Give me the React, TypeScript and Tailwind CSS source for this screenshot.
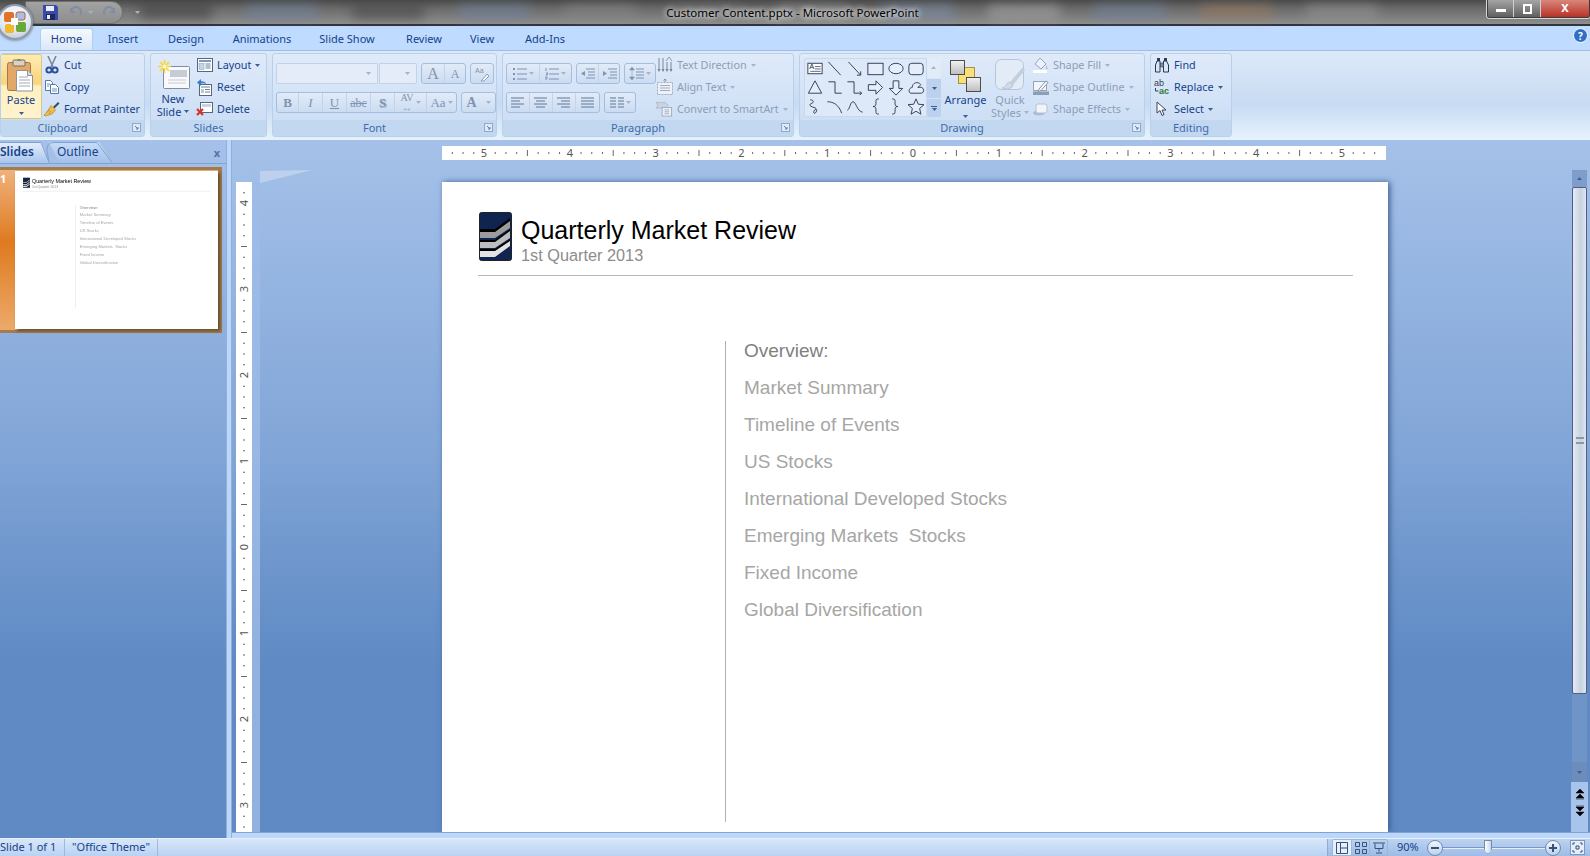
import React from 'react';

const uiFont = "[font-family:'Noto_Sans',sans-serif]";

const overviewItems = [
  'Market Summary',
  'Timeline of Events',
  'US Stocks',
  'International Developed Stocks',
  'Emerging Markets  Stocks',
  'Fixed Income',
  'Global Diversification',
];

const tabs = [
  { name: 'Insert', w: 'w-[60px]' },
  { name: 'Design', w: 'w-[66px]' },
  { name: 'Animations', w: 'w-[86px]' },
  { name: 'Slide Show', w: 'w-[84px]' },
  { name: 'Review', w: 'w-[70px]' },
  { name: 'View', w: 'w-[46px]' },
  { name: 'Add-Ins', w: 'w-[80px]' },
];

const Caret: React.FC<{ dim?: boolean }> = ({ dim }) => (
  <svg width="5" height="3" viewBox="0 0 5 3" className="shrink-0">
    <path d="M0 0h5L2.5 3z" fill={dim ? '#a3b4cc' : '#3b5f94'} />
  </svg>
);

const Launcher = () => (
  <svg width="9" height="9" viewBox="0 0 9 9" className="shrink-0">
    <rect x="0.5" y="0.5" width="8" height="8" fill="#dfe9f6" stroke="#8fa9cb" />
    <path d="M3 3l3 3M6 4v2H4" stroke="#5f7ea8" fill="none" />
  </svg>
);

const CutIcon = () => (
  <svg width="16" height="18" viewBox="0 0 16 18">
    <path d="M4 0l5 11M12 0L7 11" stroke="#7b8797" strokeWidth="1.6" />
    <circle cx="5" cy="14" r="2.6" fill="none" stroke="#2f4f9c" strokeWidth="2" />
    <circle cx="11" cy="14" r="2.6" fill="none" stroke="#2f4f9c" strokeWidth="2" />
  </svg>
);
const CopyIcon = () => (
  <svg width="16" height="16" viewBox="0 0 16 16">
    <path d="M1.5 1.5h5l2 2v8h-7z" fill="#fff" stroke="#5578a8" />
    <path d="M6.5 5.5h5l3 3v6h-8z" fill="#fff" stroke="#5578a8" />
    <path d="M3 5h3M3 7h2M8 10h5M8 12h5" stroke="#6f8fc0" />
  </svg>
);
const PainterIcon = () => (
  <svg width="16" height="16" viewBox="0 0 16 16">
    <path d="M9 6l5-5 1.5 1.5-5 5z" fill="#3e4a5e" />
    <path d="M7 4.5l4.5 4.5L8 13 1 15l-1-1 3-3z" fill="#efc04e" stroke="#b58722" strokeWidth="0.7" />
    <path d="M3 11l3-2M5 13l2-3" stroke="#b58722" strokeWidth="0.7" />
  </svg>
);
const LayoutIcon = () => (
  <svg width="16" height="14" viewBox="0 0 16 14">
    <rect x="0.5" y="0.5" width="15" height="13" fill="#fff" stroke="#56667c" />
    <rect x="2" y="2" width="12" height="2" fill="#7d98c0" />
    <rect x="2" y="5.5" width="5" height="6" fill="#c6d4e8" stroke="#7d98c0" strokeWidth="0.5" />
    <path d="M8.5 6h5M8.5 8h5M8.5 10h5" stroke="#6c7f99" />
  </svg>
);
const ResetIcon = () => (
  <svg width="17" height="17" viewBox="0 0 17 17">
    <rect x="3.5" y="5.5" width="12" height="11" fill="#fff" stroke="#56667c" />
    <path d="M5 8h9M9 10.5h5M9 13h5" stroke="#6c7f99" />
    <rect x="5" y="10" width="3" height="4" fill="#b9c9e0" />
    <path d="M1 3.5L5 0v2.2c3 0 4.5 1 5.5 3C9 4.2 7 4.2 5 4.5V7z" fill="#3a78c8" />
  </svg>
);
const DeleteIcon = () => (
  <svg width="17" height="15" viewBox="0 0 17 15">
    <rect x="4.5" y="0.5" width="12" height="10" fill="#fff" stroke="#56667c" />
    <rect x="6" y="2" width="9" height="3" fill="#c6d4e8" />
    <path d="M1 7l6 6M7 7l-6 6" stroke="#d8322a" strokeWidth="2.2" />
  </svg>
);
const ClipboardIcon = () => (
  <svg width="28" height="33" viewBox="0 0 28 33">
    <rect x="0.5" y="3.5" width="23" height="28" rx="2" fill="#e2a869" stroke="#9d7a52" />
    <rect x="6" y="1" width="12" height="6" rx="1" fill="#d9d3c4" stroke="#7c6f5d" />
    <path d="M10.5 2a1.5 1.5 0 013 0" fill="none" stroke="#7c6f5d" />
    <path d="M9.5 11.5h11l5 5v15.5h-16z" fill="#fff" stroke="#8e9299" />
    <path d="M20.5 11.5v5h5" fill="#d8dde4" stroke="#8e9299" />
    <path d="M12 18h9M12 21h11M12 24h11M12 27h11" stroke="#a3a8b2" />
  </svg>
);
const NewSlideIcon = () => (
  <svg width="32" height="32" viewBox="0 0 32 32">
    <rect x="5.5" y="6.5" width="26" height="22" rx="1" fill="#f7f9fc" stroke="#7f8ea3" />
    <rect x="12" y="10" width="17" height="7" fill="#c7ccd4" />
    <path d="M10 20h18M10 23h18" stroke="#c6ccd5" />
    <path d="M6.5 0v13M0 6.5h13M2 2l9 9M11 2l-9 9" stroke="#f6d63b" strokeWidth="1.7" />
    <circle cx="6.5" cy="6.5" r="2" fill="#fff8c4" />
  </svg>
);
const BinocularsIcon = () => (
  <svg width="16" height="16" viewBox="0 0 16 16">
    <path d="M3 1h3v3H3zM10 1h3v3h-3z" fill="#2b3d5c" />
    <path d="M1.5 15V8l1.5-4h3v11zM9.5 15V4h3l2 4v7z" fill="#dbe6f5" stroke="#233857" />
    <path d="M6.5 6h3v4h-3z" fill="#7d8ea8" stroke="#233857" strokeWidth="0.6" />
  </svg>
);
const ReplaceIcon = () => (
  <svg width="16" height="18" viewBox="0 0 16 18">
    <text x="0" y="8" fontSize="9" fontFamily="Liberation Sans" fill="#333f55">ab</text>
    <text x="5" y="16" fontSize="9" fontWeight="bold" fontFamily="Liberation Sans" fill="#2d7a35">ac</text>
    <path d="M1.5 10v3h3" stroke="#23406f" fill="none" />
  </svg>
);
const CursorIcon = () => (
  <svg width="12" height="16" viewBox="0 0 12 16">
    <path d="M1 1v11l3-2.500 2 5 2-1-2-4.500h4z" fill="#fff" stroke="#39465a" />
  </svg>
);
const FillIcon = () => (
  <svg width="16" height="16" viewBox="0 0 16 16">
    <path d="M7 1l6 6-5 5-6-5z" fill="#eef2f8" stroke="#97a5b9" />
    <path d="M13 8c1 2 2 3 1.500 4s-2 0-1.500-4z" fill="#a9b6c8" />
    <rect x="0" y="13" width="14" height="3" fill="#fff" />
  </svg>
);
const OutlineIcon = () => (
  <svg width="16" height="16" viewBox="0 0 16 16">
    <rect x="0.5" y="2.500" width="13" height="9" fill="#f3f6fa" stroke="#97a5b9" />
    <path d="M6 10l7-8 2 1.500-7 8-3 1z" fill="#fff" stroke="#8494aa" />
    <rect x="0" y="12.500" width="16" height="3.500" fill="#8c9db5" />
  </svg>
);
const EffectsIcon = () => (
  <svg width="16" height="14" viewBox="0 0 16 14">
    <ellipse cx="6" cy="11" rx="6" ry="2.500" fill="#aebccf" />
    <rect x="3" y="2" width="11" height="9" rx="2" fill="#f1f4f8" stroke="#b5c1d1" />
  </svg>
);
const TextDirIcon = () => (
  <svg width="16" height="18" viewBox="0 0 16 18">
    <path d="M2 2v13M6 2v13M10 6v9M14 6v9" stroke="#77879d" />
    <path d="M9 5l3-4 3 4" fill="none" stroke="#8d9cb1" />
    <path d="M0.500 13l1.500 3 1.500-3M4.500 13L6 16l1.500-3M8.500 13l1.500 3 1.500-3M12.500 13l1.500 3 1.500-3" fill="#77879d" />
  </svg>
);
const AlignTextIcon = () => (
  <svg width="16" height="16" viewBox="0 0 16 16">
    <rect x="0.500" y="3.500" width="15" height="12" fill="#eef2f8" stroke="#9eacc0" strokeDasharray="2 1" />
    <path d="M3 6.500h10M3 9h10M3 11.500h10" stroke="#9eacc0" />
    <path d="M8 0v3M6.500 1.500L8 0l1.500 1.500" stroke="#8092ab" fill="none" />
  </svg>
);
const SmartArtIcon = () => (
  <svg width="18" height="16" viewBox="0 0 18 16">
    <path d="M0 1h10l3 3-3 3H0l2-3z" fill="#c9d3e1" stroke="#9eacc0" strokeWidth="0.6" />
    <rect x="6.500" y="6.500" width="10" height="9" fill="#eef2f8" stroke="#9eacc0" />
    <path d="M9 9h5M9 11h5M9 13h5" stroke="#9eacc0" />
  </svg>
);
const ArrangeIcon = () => (
  <svg width="32" height="32" viewBox="0 0 32 32">
    <rect x="8.500" y="7.500" width="16" height="16" fill="#f8df7a" stroke="#a8924a" />
    <rect x="0.500" y="0.500" width="14" height="14" fill="url(#arr1)" stroke="#4c4c4c" />
    <rect x="16.500" y="17.500" width="14" height="14" fill="url(#arr1)" stroke="#4c4c4c" />
    <defs>
      <linearGradient id="arr1" x1="0" y1="0" x2="0" y2="1">
        <stop offset="0" stopColor="#f2f2f2" />
        <stop offset="1" stopColor="#bdbdbd" />
      </linearGradient>
    </defs>
  </svg>
);
const QuickStylesIcon = () => (
  <svg width="32" height="34" viewBox="0 0 32 34">
    <rect x="1.500" y="1.500" width="28" height="30" rx="6" fill="#e3ebf6" stroke="#b7c5d8" />
    <path d="M29 9L16 24l3 3L31 12z" fill="#c3cfdf" />
    <path d="M15 24c-3 1-2 5-7 6 5 2 11 0 11-3z" fill="#d2dbe8" stroke="#b7c5d8" />
  </svg>
);

const shapeCells: React.ReactNode[] = [
  <g key="0"><rect x="2.500" y="4.500" width="15" height="11" fill="#fff" stroke="#2e3d55" /><text x="4" y="11" fontSize="8" fontFamily="Liberation Sans" fill="#1b2b4b">A</text><path d="M10 8h6M5 13h11M10 10.500h6" stroke="#56677f" /></g>,
  <path key="1" d="M3 3l13 14" stroke="#2e3d55" fill="none" />,
  <path key="2" d="M3 3l13 14M16 17v-4M16 17h-4" stroke="#2e3d55" fill="none" />,
  <rect key="3" x="2.500" y="4.500" width="16" height="12" fill="#e4edf9" stroke="#2e3d55" />,
  <ellipse key="4" cx="10" cy="10" rx="7.500" ry="5.500" fill="#e4edf9" stroke="#2e3d55" />,
  <rect key="5" x="2.500" y="4.500" width="15" height="12" rx="3" fill="#e4edf9" stroke="#2e3d55" />,
  <path key="6" d="M10 3l7 13H3z" fill="#e4edf9" stroke="#2e3d55" />,
  <path key="7" d="M3 4h7v12h7" stroke="#2e3d55" fill="none" />,
  <path key="8" d="M2 4h7v12h8M15 14l2 2-2 2" stroke="#2e3d55" fill="none" />,
  <path key="9" d="M3 7h8V3l7 7-7 7v-4H3z" fill="#e4edf9" stroke="#2e3d55" />,
  <path key="10" d="M7 3h6v8h4l-7 7-7-7h4z" fill="#e4edf9" stroke="#2e3d55" />,
  <path key="11" d="M4 16c-3-3 0-6 2-6 0-5 6-7 9-3l-3 3c3-1 6 0 6 3s-2 3-4 3z" fill="#e4edf9" stroke="#2e3d55" />,
  <path key="12" d="M5 3c4 0 4 3 1 4s-1 3 3 4 3 5 1 6-2-3 1-4" stroke="#2e3d55" fill="none" />,
  <path key="13" d="M2 5c6 0 12 3 15 12" stroke="#2e3d55" fill="none" />,
  <path key="14" d="M2 14c3-2 3-9 6-9s4 10 10 11" stroke="#2e3d55" fill="none" />,
  <path key="15" d="M14 2c-3 0-3 1-3 3v2c0 2-1 3-3 3 2 0 3 1 3 3v2c0 2 0 3 3 3" stroke="#2e3d55" fill="none" />,
  <path key="16" d="M6 2c3 0 3 1 3 3v2c0 2 1 3 3 3-2 0-3 1-3 3v2c0 2 0 3-3 3" stroke="#2e3d55" fill="none" />,
  <path key="17" d="M10 2l2.400 5.600 6 .5-4.600 4 1.400 6L10 15l-5.200 3.100 1.400-6-4.600-4 6-.5z" fill="#e4edf9" stroke="#2e3d55" />,
];

// small format buttons in the Font and Paragraph groups
const Seg: React.FC<{ w: string; children?: React.ReactNode; last?: boolean }> = ({ w, children, last }) => (
  <div className={`${w} h-full flex items-center justify-center gap-[2px] ${last ? '' : 'border-r border-[#c3d4ea]'}`}>{children}</div>
);
const SegGroup: React.FC<{ children: React.ReactNode }> = ({ children }) => (
  <div className="flex h-[21px] rounded-[3px] border border-[#a6bedd] bg-[linear-gradient(180deg,#e2ebf8,#cbdcf2)]">{children}</div>
);

const RowBtn: React.FC<{ icon: React.ReactNode; label: string; caret?: boolean; dim?: boolean }> = ({ icon, label, caret, dim }) => (
  <div className={`flex items-center h-[22px] gap-[4px] text-[10.8px] whitespace-nowrap ${dim ? 'text-[#8c9db6]' : 'text-[#15428b]'}`}>
    <span className="w-[17px] flex justify-center shrink-0">{icon}</span>
    <span>{label}</span>
    {caret && <Caret dim={dim} />}
  </div>
);

const BigLabel: React.FC<{ lines: string[]; caret?: boolean; dim?: boolean }> = ({ lines, caret, dim }) => (
  <div className={`flex flex-col items-center text-[11px] leading-[13px] whitespace-nowrap ${dim ? 'text-[#8c9db6]' : 'text-[#15428b]'}`}>
    {lines.map((l, i) => (
      <div key={l} className="flex items-center gap-[3px] h-[13px]">
        {l}
        {caret && i === lines.length - 1 && <Caret dim={dim} />}
      </div>
    ))}
  </div>
);

const Group: React.FC<{ label: string; w: string; launcher?: boolean; children: React.ReactNode }> = ({ label, w, launcher, children }) => (
  <div className={`${w} h-[84px] flex flex-col shrink-0 rounded-[3px] border border-[#b9d0ec] bg-[linear-gradient(180deg,#dfeafa,#c9dcf4)] overflow-hidden`}>
    <div className="h-[67px] flex">{children}</div>
    <div className={`h-[16px] flex items-center justify-center relative bg-[#c2d8f1] text-[11px] text-[#3e6aaa] ${launcher ? 'pr-[20px]' : ''}`}>
      {label}
      {launcher && (
        <span className="absolute right-[3px] top-[3px]">
          <Launcher />
        </span>
      )}
    </div>
  </div>
);

const Logo = () => (
  <svg width="33" height="49" viewBox="0 0 33 49" className="shrink-0 ml-[1px]">
    <rect x="0.500" y="0.500" width="32" height="48" rx="2" fill="#0f2550" stroke="#222" />
    <path d="M1 17h15L31 6v6L16 23H1z" fill="#000" />
    <path d="M1 20h15L31 9v7L16 26H1z" fill="#9c9c9c" />
    <path d="M1 28h15L31 17v6L16 33H1z" fill="#000" />
    <path d="M1 30h15L31 19v7L16 36H1z" fill="#bdbdbd" />
    <path d="M1 37h15L31 27v5L16 41H1z" fill="#000" />
    <path d="M1 39h15L31 29v5L16 45H1z" fill="#e3e3e3" />
  </svg>
);

const SlideContent = () => (
  <div className="w-[946px] h-[736px] bg-white relative [font-family:'Liberation_Sans',sans-serif] pt-[30px] px-[36px]">
    <div className="flex items-start gap-[9px] h-[63px]">
      <Logo />
      <div className="pt-[1px]">
        <div className="text-[25px] leading-[34px] text-black whitespace-nowrap">Quarterly Market Review</div>
        <div className="text-[16.3px] leading-[20px] mt-[-2px] text-[#8c8c8c] whitespace-nowrap">1st Quarter 2013</div>
      </div>
    </div>
    <div className="h-px bg-[#b8b8b8] w-[875px]" />
    <div className="ml-[247px] mt-[65px] h-[481px] flex flex-col border-l border-[#b0b0b0] pl-[18px] text-[19px] leading-[37px] whitespace-pre text-[#a6a6a6]">
      <div className="text-[#7f7f7f] h-[37px] mt-[-9px]">Overview:</div>
      {overviewItems.map((t) => (
        <div key={t} className="h-[37px]">
          {t}
        </div>
      ))}
    </div>
  </div>
);

const HorizontalRuler = () => {
  const marks: React.ReactNode[] = [];
  const inch = 85.8;
  for (let i = -44; i <= 44; i++) {
    const x = 471 + (i * inch) / 8;
    if (x < 2 || x > 942) continue;
    if (i % 8 === 0) {
      marks.push(
        <text key={i} x={x} y="11" fontSize="11" textAnchor="middle" fill="#555" fontFamily="Noto Sans">
          {Math.abs(i / 8)}
        </text>,
      );
    } else if (i % 4 === 0) {
      marks.push(<rect key={i} x={x} y="4" width="1" height="6" fill="#666" />);
    } else {
      marks.push(<rect key={i} x={x} y="6" width="1" height="2" fill="#666" />);
    }
  }
  return (
    <svg width="944" height="14" viewBox="0 0 944 14" className="bg-white block">
      {marks}
    </svg>
  );
};

const VerticalRuler = () => {
  const marks: React.ReactNode[] = [];
  const inch = 86;
  for (let i = -34; i <= 30; i++) {
    const y = 365 + (i * inch) / 8;
    if (y < 1 || y > 648) continue;
    if (i % 8 === 0) {
      marks.push(
        <text key={i} x="8" y={y + 4} fontSize="11" textAnchor="middle" fill="#555" fontFamily="Noto Sans" transform={`rotate(-90 8 ${y})`}>
          {Math.abs(i / 8)}
        </text>,
      );
    } else if (i % 4 === 0) {
      marks.push(<rect key={i} x="5" y={y} width="6" height="1" fill="#666" />);
    } else {
      marks.push(<rect key={i} x="7" y={y} width="2" height="1" fill="#666" />);
    }
  }
  return (
    <svg width="16" height="650" viewBox="0 0 16 650" className="bg-white block">
      {marks}
    </svg>
  );
};

const OfficeButton = () => (
  <div className="absolute left-[-3px] top-[4px] w-[36px] h-[36px] rounded-full border-2 border-[#8f9aa6] bg-[radial-gradient(circle_at_50%_30%,#ffffff,#dce6f2_60%,#aeb9c6)] flex items-center justify-center shadow-[0_0_3px_#555] z-10">
    <svg width="26" height="26" viewBox="0 0 26 26">
      <rect x="2" y="3" width="10" height="10" rx="2" fill="#e2722a" />
      <rect x="14" y="3" width="9" height="8" rx="2" fill="#9fc3e8" stroke="#d2542a" />
      <rect x="3" y="15" width="9" height="9" rx="2" fill="#f2b82c" />
      <rect x="14" y="13" width="10" height="10" rx="2" fill="#6aa83c" />
      <rect x="9" y="9" width="7" height="7" fill="#fff" />
    </svg>
  </div>
);

const QuickAccess = () => (
  <div className="ml-[25px] w-[98px] h-[23px] mt-[1px] rounded-r-full bg-[linear-gradient(180deg,#a2a2a2,#8e8e8e)] border border-[#6f6f6f] flex items-center pl-[17px] gap-[6px]">
    <svg width="15" height="15" viewBox="0 0 15 15">
      <path d="M0 0h13l2 2v13H0z" fill="#3a4aa8" />
      <rect x="3" y="1" width="8" height="5" fill="#e8edf6" />
      <rect x="3" y="9" width="9" height="6" fill="#20295e" />
      <rect x="4" y="10" width="3" height="4" fill="#e8edf6" />
    </svg>
    <svg width="13" height="13" viewBox="0 0 13 13" className="ml-[5px]">
      <path d="M2 6a5 5 0 119 3M2 2v4h4" fill="none" stroke="#7f8ea5" strokeWidth="2" />
    </svg>
    <Caret dim />
    <svg width="13" height="13" viewBox="0 0 13 13" className="ml-[4px]">
      <path d="M11 6a5 5 0 10-9 3M11 2v4H7" fill="none" stroke="#7f8ea5" strokeWidth="2" />
    </svg>
  </div>
);

const WindowButtons = () => (
  <div className="flex h-[18px] border border-t-0 border-[#3c3c3c] rounded-b-[3px] overflow-hidden shrink-0 shadow-[0_0_0_1px_#d8d8d8]">
    <div className="w-[26px] bg-[linear-gradient(180deg,#a5a5a5,#5f5f5f)] flex items-center justify-center border-r border-[#d0d0d0]">
      <div className="w-[10px] h-[3px] bg-white mt-[4px]" />
    </div>
    <div className="w-[27px] bg-[linear-gradient(180deg,#a5a5a5,#5f5f5f)] flex items-center justify-center border-r border-[#d0d0d0]">
      <div className="w-[9px] h-[10px] border-2 border-white" />
    </div>
    <div className="w-[48px] bg-[linear-gradient(180deg,#d9867a,#b83226)] flex items-center justify-center text-white font-bold text-[11px]">X</div>
  </div>
);

export default function App() {
  return (
    <div className={`w-[1590px] h-[856px] flex flex-col overflow-hidden ${uiFont} bg-[#bfdbff]`}>
      {/* Title bar */}
      <div className="h-[26px] shrink-0 relative flex border-b-2 border-b-[#30353b] bg-[linear-gradient(180deg,#4a4a4a,#6a6a6a_35%,#8e8e8e)]">
        <div className="absolute inset-0 flex items-center gap-[34px] pl-[140px] blur-[6px] opacity-50 overflow-hidden">
          {['bg-[#2f2f2f]', 'bg-[#6e87a8]', 'bg-[#3a3a3a]', 'bg-[#6e87a8]', 'bg-[#8a8a8a]', 'bg-[#7a7a7a]', 'bg-[#9a9a9a]', 'bg-[#7b93b4]', 'bg-[#b1b1b1]', 'bg-[#6e87a8]', 'bg-[#a07a55]', 'bg-[#9a9a9a]'].map((c, i) => (
            <div key={i} className={`${c} w-[72px] h-[14px] rounded-sm shrink-0`} />
          ))}
        </div>
        <OfficeButton />
        <div className="relative z-[1]">
          <QuickAccess />
        </div>
        <div className="relative ml-[12px] self-center z-[1]">
          <Caret dim />
        </div>
        <div className="relative z-[1] flex-1 flex justify-center pr-[42px] pt-[5px] text-[11.5px] leading-[16px] text-black [text-shadow:0_0_6px_#fff,0_0_6px_#fff]">
          Customer Content.pptx - Microsoft PowerPoint
        </div>
        <div className="relative z-[1]">
          <WindowButtons />
        </div>
      </div>

      {/* Tabs */}
      <div className="h-[24px] shrink-0 flex items-end pl-[40px] bg-[#bfdbff] text-[11px] text-[#15428b]">
        <div className="w-[53px] h-[22px] flex items-center justify-center rounded-t-[3px] border border-b-0 border-[#b3cdea] bg-[linear-gradient(180deg,#f5f9fe,#dbe8f8)]">Home</div>
        {tabs.map((t) => (
          <div key={t.name} className={`${t.w} h-[22px] flex items-center justify-center`}>
            {t.name}
          </div>
        ))}
        <div className="flex-1 flex justify-end pr-[2px] self-start pt-[2px]">
          <div className="w-[15px] h-[15px] rounded-full bg-[#2f6fc4] border border-white text-white text-[10px] font-bold flex items-center justify-center leading-none">?</div>
        </div>
      </div>

      {/* Ribbon */}
      <div className="h-[90px] shrink-0 flex gap-[5px] pt-[2px] border-t border-[#9dbde2] bg-[linear-gradient(180deg,#dde9f8,#c8dbf3_60%,#e6f3fd)]">
        <Group label="Clipboard" w="w-[145px]" launcher>
          <div className="w-[41px] h-[65px] shrink-0 flex flex-col items-center rounded-r-[2px] border border-l-0 border-[#d8c68c] bg-[linear-gradient(180deg,#fdecb4,#fbd476_45%,#fff0c0_50%,#fef3cf)]">
            <div className="h-[36px] pt-[4px]">
              <ClipboardIcon />
            </div>
            <div className="text-[11px] text-[#15428b] leading-[13px] mt-[2px]">Paste</div>
            <div className="mt-[6px]">
              <Caret />
            </div>
          </div>
          <div className="pl-[1px]">
            <RowBtn icon={<CutIcon />} label="Cut" />
            <RowBtn icon={<CopyIcon />} label="Copy" />
            <RowBtn icon={<PainterIcon />} label="Format Painter" />
          </div>
        </Group>
        <Group label="Slides" w="w-[117px]">
          <div className="w-[44px] flex flex-col items-center">
            <div className="h-[38px] pt-[6px] pl-[2px]">
              <NewSlideIcon />
            </div>
            <BigLabel lines={['New', 'Slide']} caret />
          </div>
          <div className="pl-[1px]">
            <RowBtn icon={<LayoutIcon />} label="Layout" caret />
            <RowBtn icon={<ResetIcon />} label="Reset" />
            <RowBtn icon={<DeleteIcon />} label="Delete" />
          </div>
        </Group>
        <Group label="Font" w="w-[225px]" launcher>
          <div className="pl-[3px] pt-[9px] flex flex-col gap-[8px]">
            <div className="flex gap-[4px]">
              <div className="flex h-[21px] gap-px">
                <div className="w-[102px] border border-[#c2d3e8] bg-[#e3ecf8] rounded-l-[2px] flex items-center justify-end pr-[6px]">
                  <Caret dim />
                </div>
                <div className="w-[38px] border border-[#c2d3e8] bg-[#e3ecf8] rounded-r-[2px] flex items-center justify-end pr-[6px]">
                  <Caret dim />
                </div>
              </div>
              <SegGroup>
                <Seg w="w-[23px]">
                  <span className="[font-family:'Liberation_Serif',serif] text-[16px] text-[#7f93b1]">A</span>
                </Seg>
                <Seg w="w-[20px]" last>
                  <span className="[font-family:'Liberation_Serif',serif] text-[12px] text-[#7f93b1]">A</span>
                </Seg>
              </SegGroup>
              <SegGroup>
                <Seg w="w-[22px]" last>
                  <svg width="16" height="16" viewBox="0 0 16 16">
                    <text x="1" y="7" fontSize="7" fill="#7f93b1" fontFamily="Liberation Sans">Aa</text>
                    <path d="M8 14l5-6 2 2-5 5H7z" fill="#f4f6fa" stroke="#8ca0bc" />
                  </svg>
                </Seg>
              </SegGroup>
            </div>
            <div className="flex gap-[4px] [font-family:'Liberation_Serif',serif] text-[#7f93b1]">
              <SegGroup>
                <Seg w="w-[22px]"><span className="font-bold text-[13px]">B</span></Seg>
                <Seg w="w-[24px]"><span className="italic text-[13px]">I</span></Seg>
                <Seg w="w-[24px]"><span className="underline text-[13px]">U</span></Seg>
                <Seg w="w-[24px]"><span className="line-through text-[12px]">abc</span></Seg>
                <Seg w="w-[24px]"><span className="font-bold text-[13px] [text-shadow:1px_1px_1px_#8ea2bd]">S</span></Seg>
                <Seg w="w-[32px]">
                  <span className="text-[10px] leading-[10px] text-center">AV<br />↔</span>
                  <Caret dim />
                </Seg>
                <Seg w="w-[29px]" last>
                  <span className="text-[13px]">Aa</span>
                  <Caret dim />
                </Seg>
              </SegGroup>
              <SegGroup>
                <Seg w="w-[33px]" last>
                  <span className="text-[14px] font-bold mr-[7px]">A</span>
                  <Caret dim />
                </Seg>
              </SegGroup>
            </div>
          </div>
        </Group>
        <Group label="Paragraph" w="w-[292px]" launcher>
          <div className="pl-[3px] pt-[9px] flex flex-col gap-[8px] shrink-0">
            <div className="flex gap-[4px]">
              <SegGroup>
                <Seg w="w-[33px]">
                  <svg width="14" height="12" viewBox="0 0 14 12">
                    <path d="M0 1h2M0 6h2M0 11h2" stroke="#7f93b1" strokeWidth="2" />
                    <path d="M4 1h10M4 6h10M4 11h10" stroke="#7f93b1" />
                  </svg>
                  <Caret dim />
                </Seg>
                <Seg w="w-[31px]" last>
                  <svg width="14" height="12" viewBox="0 0 14 12">
                    <path d="M1 0v3M1 5h2L1 7h2M0 9h2v2H0" stroke="#7f93b1" fill="none" />
                    <path d="M4 1h10M4 6h10M4 11h10" stroke="#7f93b1" />
                  </svg>
                  <Caret dim />
                </Seg>
              </SegGroup>
              <SegGroup>
                <Seg w="w-[22px]">
                  <svg width="15" height="12" viewBox="0 0 15 12">
                    <path d="M6 1h9M8 4h7M8 7h7M6 10h9" stroke="#7f93b1" />
                    <path d="M5 3v5L1 5.500z" fill="#7f93b1" />
                  </svg>
                </Seg>
                <Seg w="w-[20px]" last>
                  <svg width="15" height="12" viewBox="0 0 15 12">
                    <path d="M6 1h9M8 4h7M8 7h7M6 10h9" stroke="#7f93b1" />
                    <path d="M1 3v5l4-2.500z" fill="#7f93b1" />
                  </svg>
                </Seg>
              </SegGroup>
              <SegGroup>
                <Seg w="w-[30px]" last>
                  <svg width="15" height="15" viewBox="0 0 15 15">
                    <path d="M3 1l2.500 3h-5zM3 14l2.500-3h-5zM3 4v7" fill="#7f93b1" stroke="#7f93b1" strokeWidth="0.5" />
                    <path d="M7 3h8M7 6h8M7 9h8M7 12h8" stroke="#7f93b1" />
                  </svg>
                  <Caret dim />
                </Seg>
              </SegGroup>
            </div>
            <div className="flex gap-[4px]">
              <SegGroup>
                {[
                  'M0 1h13M0 4h9M0 7h13M0 10h9',
                  'M0 1h13M2 4h9M0 7h13M2 10h9',
                  'M0 1h13M4 4h9M0 7h13M4 10h9',
                  'M0 1h13M0 4h13M0 7h13M0 10h13',
                ].map((d, i) => (
                  <Seg key={d} w="w-[23px]" last={i === 3}>
                    <svg width="14" height="11" viewBox="0 0 14 11">
                      <path d={d} stroke="#61789a" />
                    </svg>
                  </Seg>
                ))}
              </SegGroup>
              <SegGroup>
                <Seg w="w-[30px]" last>
                  <svg width="14" height="12" viewBox="0 0 14 12">
                    <path d="M0 1h6M0 4h6M0 7h6M0 10h6M8 1h6M8 4h6M8 7h6M8 10h6" stroke="#61789a" />
                  </svg>
                  <Caret dim />
                </Seg>
              </SegGroup>
            </div>
          </div>
          <div className="pt-0">
            <RowBtn icon={<TextDirIcon />} label="Text Direction" caret dim />
            <RowBtn icon={<AlignTextIcon />} label="Align Text" caret dim />
            <RowBtn icon={<SmartArtIcon />} label="Convert to SmartArt" caret dim />
          </div>
        </Group>
        <Group label="Drawing" w="w-[346px]" launcher>
          <div className="pl-[4px] pt-[4px] flex shrink-0">
            <div className="w-[123px] h-[59px] grid grid-cols-6 content-start border border-[#c8d9ee] bg-[#dde9f8] rounded-l-[2px]">
              {shapeCells.map((c, i) => (
                <svg key={i} width="20" height="19" viewBox="0 0 20 20">
                  {c}
                </svg>
              ))}
            </div>
            <div className="w-[14px] h-[59px] flex flex-col gap-px">
              <div className="h-[20px] flex items-center justify-center rounded-t-[2px] bg-[#e2ebf8] rotate-180"><Caret dim /></div>
              <div className="h-[19px] flex items-center justify-center bg-[#bcd1ee]"><Caret /></div>
              <div className="h-[18px] flex flex-col items-center justify-center gap-px rounded-b-[2px] bg-[#bcd1ee]">
                <div className="w-[6px] h-px bg-[#3b5f94]" />
                <Caret />
              </div>
            </div>
          </div>
          <div className="w-[53px] ml-[-2px] flex flex-col items-center shrink-0">
            <div className="h-[39px] pt-[6px]">
              <ArrangeIcon />
            </div>
            <BigLabel lines={['Arrange']} />
            <div className="mt-[9px]">
              <Caret />
            </div>
          </div>
          <div className="w-[40px] ml-[-2px] flex flex-col items-center shrink-0">
            <div className="h-[39px] pt-[4px]">
              <QuickStylesIcon />
            </div>
            <BigLabel lines={['Quick', 'Styles']} caret dim />
          </div>
          <div className="pl-[2px]">
            <RowBtn icon={<FillIcon />} label="Shape Fill" caret dim />
            <RowBtn icon={<OutlineIcon />} label="Shape Outline" caret dim />
            <RowBtn icon={<EffectsIcon />} label="Shape Effects" caret dim />
          </div>
        </Group>
        <Group label="Editing" w="w-[82px]">
          <div className="pl-[2px]">
            <RowBtn icon={<BinocularsIcon />} label="Find" />
            <RowBtn icon={<ReplaceIcon />} label="Replace" caret />
            <RowBtn icon={<CursorIcon />} label="Select" caret />
          </div>
        </Group>
      </div>

      {/* Work area */}
      <div className="h-[698px] shrink-0 flex bg-[linear-gradient(180deg,#a5c1e9,#81a5d7_45%,#6f97cd_60%,#5f8ac4_75%,#5f8ac4)]">
        {/* Slides pane */}
        <div className="w-[226px] shrink-0 flex flex-col">
          <div className="h-[22px] mt-[2px] flex border-b border-[#7fa3d2] relative text-[12px] text-[#15428b]">
            <div className="w-[50px] h-[21px] font-semibold leading-[20px] bg-[linear-gradient(180deg,#e6effb,#a9c6ec)] [clip-path:polygon(0_0,82%_0,100%_100%,0_100%)] whitespace-nowrap">Slides</div>
            <div className="w-[64px] h-[21px] ml-[-1px] pl-[8px] leading-[20px] bg-[linear-gradient(180deg,#c9ddf6,#a2c0ea)] [clip-path:polygon(0_0,78%_0,100%_100%,16%_100%)] whitespace-nowrap">Outline</div>
            <svg width="116" height="21" viewBox="0 0 116 21" className="absolute left-0 top-0">
              <path d="M0 .5h41l8 20M49 20.500l-2-12q-1-8 7-8h43l15 20" fill="none" stroke="#7fa3d2" />
            </svg>
            <div className="flex-1 flex justify-end items-center pr-[6px] pb-[1px] text-[11px] font-bold text-[#4f72a8] leading-none">x</div>
          </div>
          <div className="mt-[3px] w-[222px] h-[166px] flex items-center pl-[15px] relative border-y-[3px] border-r-[4px] border-[#a47c4e] bg-[linear-gradient(180deg,#efb27c,#df7a20_45%,#ecaa69)]">
            <span className="absolute left-0 top-[3px] text-[11px] leading-none font-bold text-white">1</span>
            <div className="w-[203px] h-[158px] overflow-hidden shadow-[2px_2px_3px_#5f4a2e] bg-white">
              <div className="w-[946px] h-[736px] origin-top-left scale-[0.2146]">
                <SlideContent />
              </div>
            </div>
          </div>
        </div>

        {/* Splitter */}
        <div className="w-[6px] shrink-0 bg-[#bdd7f8] border-x border-[#8fb0dc]" />

        <div className="flex-1 flex flex-col">
          <div className="h-[692px] flex overflow-hidden relative">
            <svg width="52" height="14" viewBox="0 0 52 14" className="absolute left-[28px] top-[30px]">
              <path d="M0 1l52-1L0 13z" fill="#fff" fillOpacity="0.3" />
            </svg>
            {/* Vertical ruler */}
            <div className="w-[28px] shrink-0 pl-[4px] pt-[42px]">
              <div className="flex w-[24px]">
                <VerticalRuler />
                <div className="w-[8px] h-[650px] bg-[#9dbce6]/80" />
              </div>
            </div>
            {/* Ruler and slide */}
            <div className="w-[1311px] shrink-0 flex flex-col pl-[182px]">
              <div className="h-[42px] pt-[6px]">
                <HorizontalRuler />
              </div>
              <div className="w-[946px] h-[650px] overflow-hidden shadow-[2px_0_6px_#3f5f90]">
                <SlideContent />
              </div>
            </div>
            {/* Scrollbar */}
            <div className="flex-1 flex flex-col items-center pt-[30px] pr-[2px]">
              <div className="w-[15px] h-[17px] bg-[#7f9dca] flex items-center justify-center rotate-180">
                <Caret />
              </div>
              <div className="w-[15px] h-[507px] rounded-[2px] border border-[#4f5f85] bg-[linear-gradient(90deg,#e6e9f7,#c6d4de_60%,#e0e5f3)] flex items-center justify-center">
                <div className="w-[8px] h-[7px] border-y-2 border-[#8d97a6] border-double" />
              </div>
              <div className="w-[15px] h-[68px] bg-[#7f9dca]/50" />
              <div className="w-[15px] h-[20px] bg-[#6d8cbb] flex items-center justify-center">
                <Caret />
              </div>
              <div className="w-full flex-1 flex flex-col items-center gap-[5px] pt-[7px] bg-[#a8c3ec] text-black">
                <svg width="10" height="11" viewBox="0 0 10 11">
                  <path d="M5 0l4 4H1zM5 5l4 4H1zM1 10h8" fill="#000" stroke="#000" strokeWidth="0.5" />
                </svg>
                <svg width="10" height="11" viewBox="0 0 10 11">
                  <path d="M1 1h8M5 6L1 2h8zM5 11L1 7h8z" fill="#000" stroke="#000" strokeWidth="0.5" />
                </svg>
              </div>
            </div>
          </div>
          <div className="h-[6px] bg-[#bdd7f8] border-t border-[#7fa3d2]" />
        </div>
      </div>

      {/* Status bar */}
      <div className="h-[18px] shrink-0 flex items-center text-[11px] text-[#15428b] bg-[linear-gradient(180deg,#d8e7fa,#b9d2f3)] border-t border-[#e6f0fd]">
        <div className="w-[65px] h-full flex items-center border-r border-[#9fb9dc] whitespace-nowrap">Slide 1 of 1</div>
        <div className="w-[93px] h-full flex items-center justify-center border-r border-[#9fb9dc] whitespace-nowrap">"Office Theme"</div>
        <div className="flex-1" />
        <div className="w-[263px] h-full flex items-center pl-[4px] bg-[linear-gradient(180deg,#bcd3f1,#9dbce6)] border-l border-[#8fabd3]">
          <div className="flex h-[17px] w-[56px] rounded-[2px] border border-[#9db6d8] shrink-0">
            <div className="w-[19px] flex items-center justify-center bg-[#e6effb] border-r border-[#9db6d8]">
              <svg width="12" height="12" viewBox="0 0 12 12">
                <path d="M.5.5h11v11H.5zM4.500.5v11M4.500 6h7" fill="none" stroke="#35517d" />
              </svg>
            </div>
            <div className="w-[18px] flex items-center justify-center border-r border-[#9db6d8]">
              <svg width="12" height="12" viewBox="0 0 12 12">
                <path d="M.5.5h4v4h-4zM7.500.5h4v4h-4zM.5 7.500h4v4h-4zM7.500 7.500h4v4h-4z" fill="none" stroke="#35517d" />
              </svg>
            </div>
            <div className="flex-1 flex items-center justify-center">
              <svg width="12" height="12" viewBox="0 0 12 12">
                <path d="M0 1h12M2 1.500v5h8v-5M6 6.500v3M3 11h6" fill="none" stroke="#35517d" />
              </svg>
            </div>
          </div>
          <span className="ml-[9px] w-[24px] shrink-0">90%</span>
          <div className="ml-[6px] w-[16px] h-[16px] rounded-full border border-[#6f8cb5] bg-[linear-gradient(180deg,#f3f7fd,#bcd0ea)] flex items-center justify-center shrink-0">
            <div className="w-[8px] h-[2px] bg-[#35517d]" />
          </div>
          <div className="relative w-[102px] h-px bg-[#7d98c0] shrink-0 shadow-[0_1px_0_#e6eef9]">
            <div className="absolute left-[41px] top-[-7px] w-[8px] h-[14px] bg-[linear-gradient(90deg,#fff,#c8d6ea)] border border-[#6f8cb5] [clip-path:polygon(0_0,100%_0,100%_65%,50%_100%,0_65%)]" />
          </div>
          <div className="w-[16px] h-[16px] rounded-full border border-[#6f8cb5] bg-[linear-gradient(180deg,#f3f7fd,#bcd0ea)] flex items-center justify-center relative shrink-0">
            <div className="w-[8px] h-[2px] bg-[#35517d]" />
            <div className="absolute w-[2px] h-[8px] bg-[#35517d]" />
          </div>
          <div className="ml-[9px] w-[15px] h-[15px] border border-[#7d98c0] bg-[#e6eef9] flex items-center justify-center shrink-0">
            <svg width="11" height="11" viewBox="0 0 11 11">
              <path d="M1 3V1h2M8 1h2v2M1 8v2h2M10 8v2H8M4 4h3v3H4z" fill="none" stroke="#35517d" />
            </svg>
          </div>
        </div>
      </div>
    </div>
  );
}
